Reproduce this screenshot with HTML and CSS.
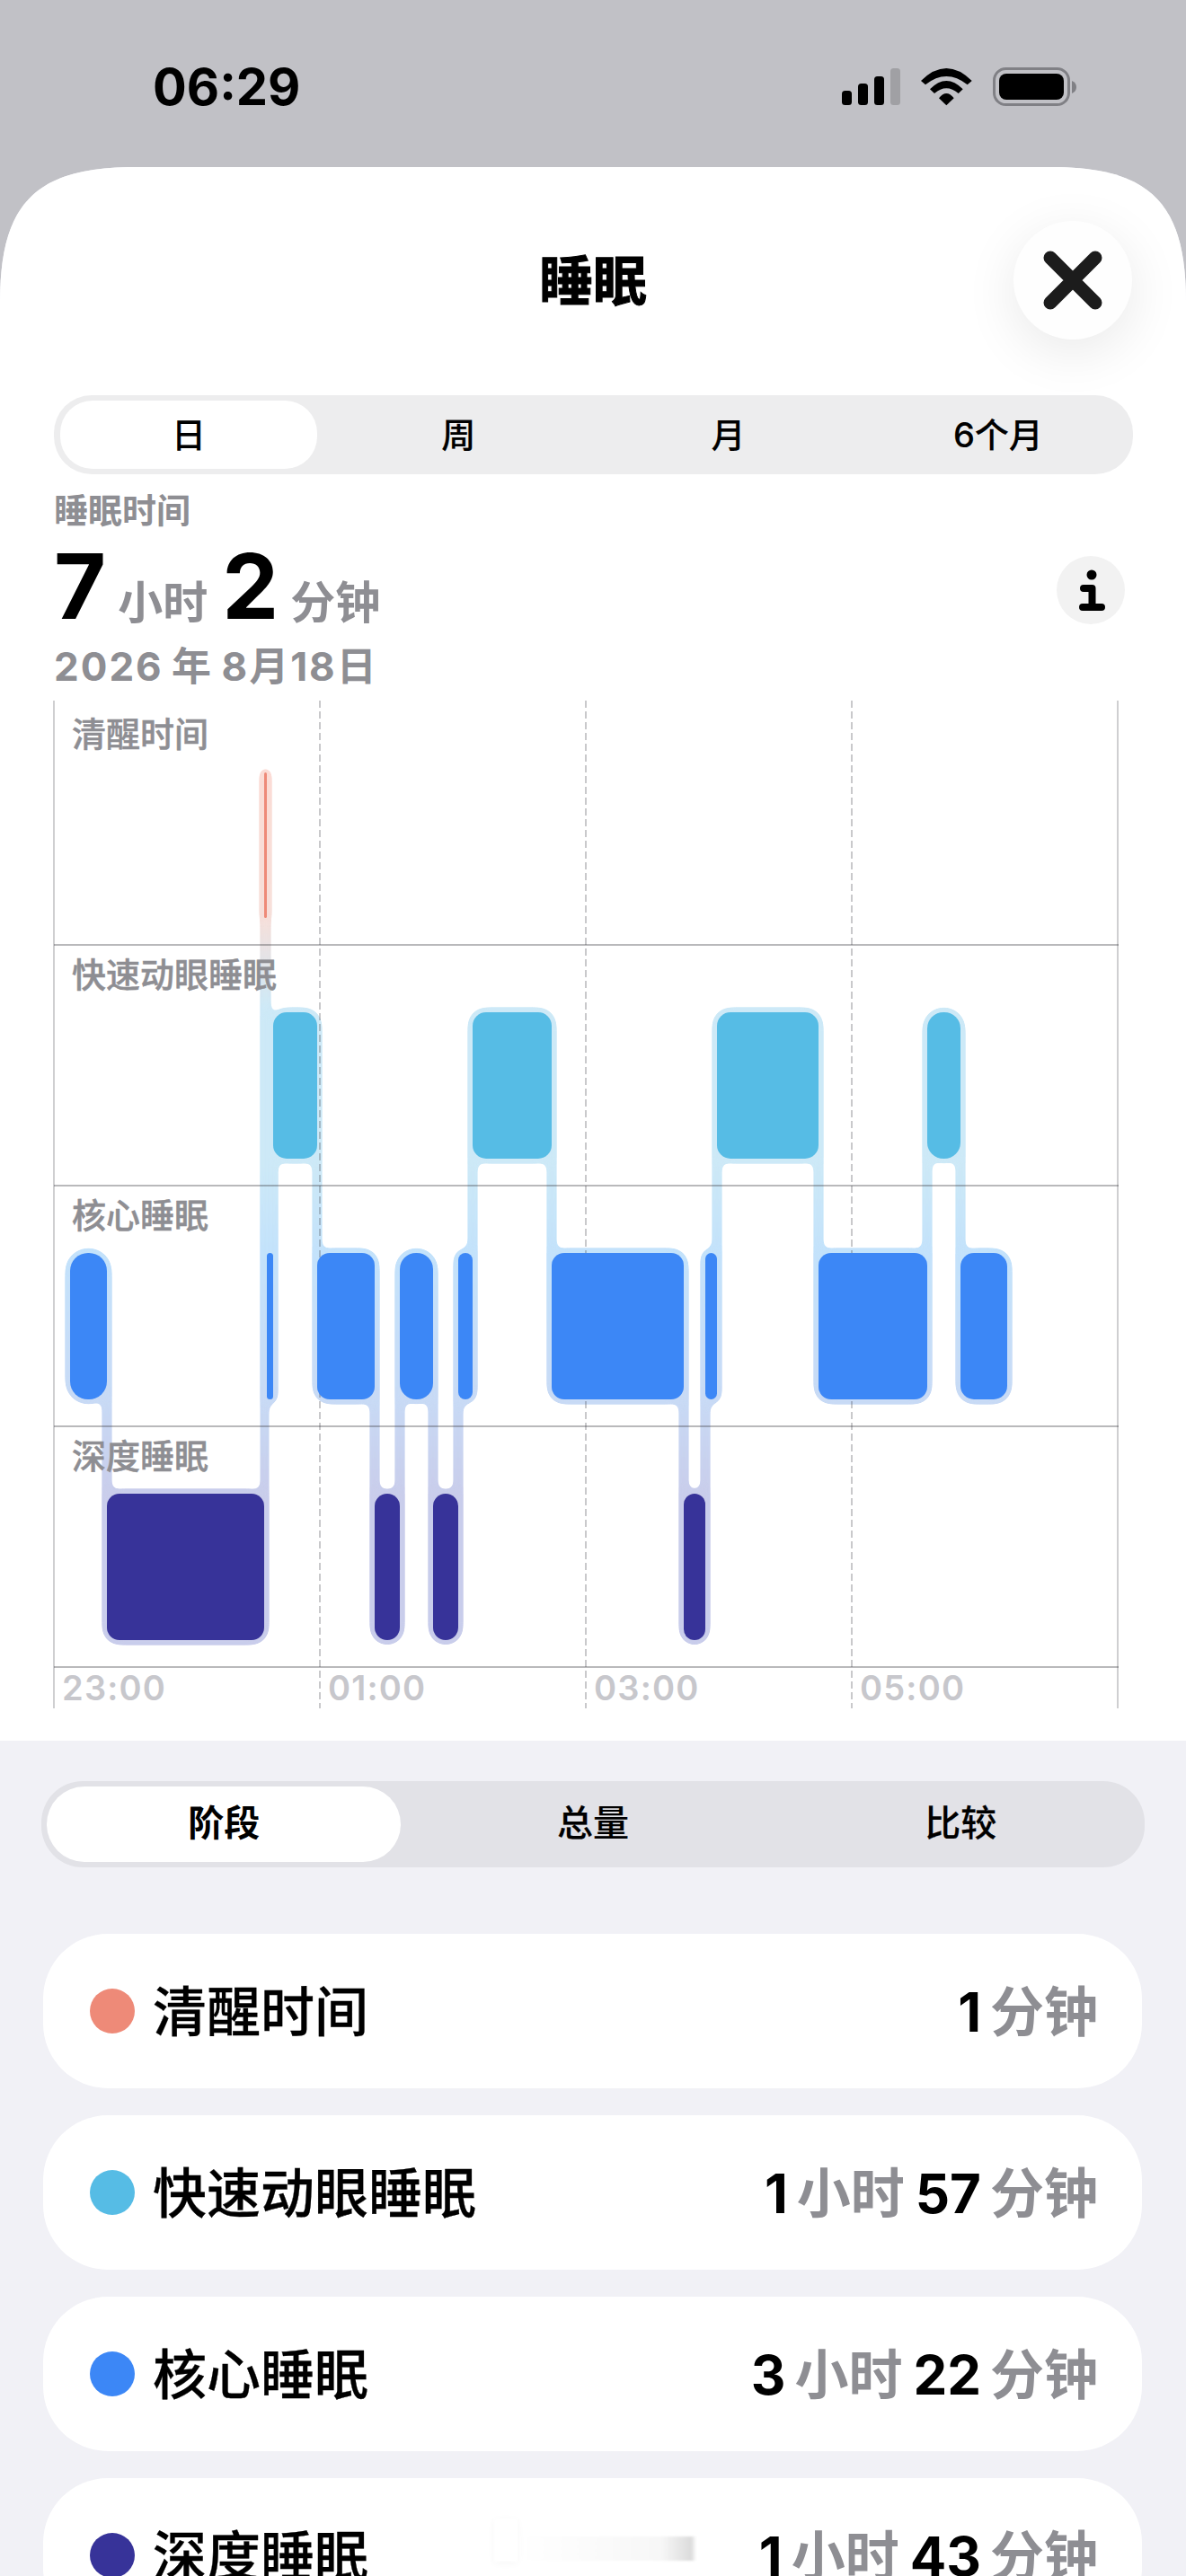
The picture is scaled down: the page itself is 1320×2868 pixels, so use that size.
FILE: index.html
```html
<!DOCTYPE html>
<html lang="zh-CN">
<head>
    <meta charset="UTF-8">
    <meta name="viewport" content="width=device-width, initial-scale=1.0">
    <title>睡眠</title>
    <link rel="stylesheet" href="styles.css">
</head>
<body>
    <div class="status-bar">
        <span class="status-time">06:29</span>
        <svg class="status-icons" width="261" height="44" viewBox="0 0 261 44">
            <rect x="0" y="26" width="11" height="16" rx="3.5"/>
            <rect x="18" y="18" width="11" height="24" rx="3.5"/>
            <rect x="36" y="10" width="11" height="32" rx="3.5"/>
            <rect x="54" y="1" width="11" height="41" rx="3.5" fill="#a0a0a4"/>
            <path d="M88 15Q116.3 -13 144.7 15L139.7 19.3Q116.3 .7 93 19.3Z"/>
            <path d="M98 24.3Q116.3 5.7 134.7 24.3L129.7 29Q116.3 17.6 103 29Z"/>
            <path d="M108 34.3Q116.3 23.7 124.7 34.3L116.3 42.3Z"/>
            <rect x="169.5" y="1.5" width="83" height="40" rx="13" fill="none" stroke="#808085" stroke-width="3"/>
            <rect x="175" y="7" width="72" height="29" rx="8"/>
            <path d="M256 15Q261 17 261 22Q261 27 256 29Z" fill="#808085"/>
        </svg>
    </div>

    <div class="sheet">
        <div class="sheet-top">
            <div class="sheet-header">
                <span></span>
                <h1 class="sheet-title">睡眠</h1>
                <button type="button" class="close-button">
                    <svg width="132" height="132" viewBox="0 0 132 132">
                        <path d="M41 41L91 91M91 41L41 91" fill="none" stroke="#1c1c1c" stroke-width="15" stroke-linecap="round"/>
                    </svg>
                </button>
            </div>

            <div class="segments segments-period">
                <div class="segment segment-active">日</div>
                <div class="segment">周</div>
                <div class="segment">月</div>
                <div class="segment">6个月</div>
            </div>

            <div class="summary">
                <div>
                    <div class="summary-label">睡眠时间</div>
                    <div class="summary-total">
                        <span class="total-num">7</span><span class="total-unit">小时</span><span class="total-num">2</span><span class="total-unit">分钟</span>
                    </div>
                    <div class="summary-date">2026 年 8月18日</div>
                </div>
                <div class="info-button">
                    <svg width="76" height="76" viewBox="0 0 76 76">
                        <circle cx="39" cy="21" r="5.5"/>
                        <path d="M30 36H39.5V56M29 57H50" fill="none" stroke="#000" stroke-width="8" stroke-linecap="round" stroke-linejoin="round"/>
                    </svg>
                </div>
            </div>

            <svg class="chart" width="1320" height="1122" viewBox="0 780 1320 1122">
                <defs>
                    <linearGradient id="haloFade" gradientUnits="userSpaceOnUse" x1="0" y1="860" x2="0" y2="1831">
                        <stop offset="0" stop-color="#fbdcd5"/>
                        <stop offset="0.167" stop-color="#f6dfda"/>
                        <stop offset="0.27" stop-color="#cde9f7"/>
                        <stop offset="0.45" stop-color="#cde9f7"/>
                        <stop offset="0.55" stop-color="#c3e2fb"/>
                        <stop offset="0.72" stop-color="#c8daf5"/>
                        <stop offset="0.83" stop-color="#c9cdeb"/>
                        <stop offset="1" stop-color="#c9cdeb"/>
                    </linearGradient>
                    <filter id="goo" filterUnits="userSpaceOnUse" x="0" y="780" width="1320" height="1122" color-interpolation-filters="sRGB">
                        <feGaussianBlur stdDeviation="5"/>
                        <feColorMatrix values="1 0 0 0 0  0 1 0 0 0  0 0 1 0 0  0 0 0 16 -6.6"/>
                    </filter>
                </defs>

                <!-- halos and connectors -->
                <g fill="url(#haloFade)" filter="url(#goo)">
                    <rect x="289" y="855" width="13" height="172" rx="6.5"/>

                    <rect x="299" y="1122" width="59" height="173" rx="20"/>
                    <rect x="521" y="1122" width="98" height="173" rx="20"/>
                    <rect x="793" y="1122" width="123" height="173" rx="20"/>
                    <rect x="1027" y="1122" width="47" height="173" rx="23"/>

                    <rect x="73" y="1390" width="51" height="173" rx="25"/>
                    <rect x="292" y="1390" width="17" height="173" rx="8"/>
                    <rect x="348" y="1390" width="74" height="173" rx="19"/>
                    <rect x="440" y="1390" width="47" height="173" rx="23"/>
                    <rect x="505" y="1390" width="26" height="173" rx="13"/>
                    <rect x="609" y="1390" width="157" height="173" rx="19"/>
                    <rect x="780" y="1390" width="23" height="173" rx="11"/>
                    <rect x="906" y="1390" width="131" height="173" rx="19"/>
                    <rect x="1064" y="1390" width="62" height="173" rx="20"/>

                    <rect x="114" y="1658" width="185" height="173" rx="19"/>
                    <rect x="412" y="1658" width="38" height="173" rx="19"/>
                    <rect x="477" y="1658" width="38" height="173" rx="19"/>
                    <rect x="756" y="1658" width="34" height="173" rx="17"/>

                    <rect x="290" y="900" width="11" height="600"/>
                    <rect x="290" y="1480" width="9" height="220"/>
                    <rect x="299" y="1200" width="10" height="300"/>
                    <rect x="348" y="1200" width="10" height="300"/>
                    <rect x="521" y="1200" width="10" height="300"/>
                    <rect x="609" y="1200" width="10" height="300"/>
                    <rect x="793" y="1200" width="10" height="300"/>
                    <rect x="906" y="1200" width="10" height="300"/>
                    <rect x="1027" y="1200" width="10" height="300"/>
                    <rect x="1064" y="1200" width="10" height="300"/>
                    <rect x="114" y="1500" width="10" height="200"/>
                    <rect x="412" y="1500" width="10" height="200"/>
                    <rect x="440" y="1500" width="10" height="200"/>
                    <rect x="477" y="1500" width="10" height="200"/>
                    <rect x="505" y="1500" width="10" height="200"/>
                    <rect x="756" y="1500" width="10" height="200"/>
                    <rect x="780" y="1500" width="10" height="200"/>
                </g>

                <!-- grid -->
                <path class="grid-dash" d="M356 780V1902M652 780V1902M948 780V1902"/>
                <path class="grid-edge" d="M60 780V1902M1244 780V1902"/>
                <path class="grid-row" d="M60 1052H1245M60 1320H1245M60 1588H1245M60 1856H1245"/>

                <!-- stages -->
                <rect x="294" y="860" width="3" height="162" rx="1.5" fill="#ee8a78"/>

                <g fill="#56bce5">
                    <rect x="304" y="1127" width="49" height="163" rx="15"/>
                    <rect x="526" y="1127" width="88" height="163" rx="15"/>
                    <rect x="798" y="1127" width="113" height="163" rx="15"/>
                    <rect x="1032" y="1127" width="37" height="163" rx="18"/>
                </g>
                <g fill="#3c87f6">
                    <rect x="78" y="1395" width="41" height="163" rx="20"/>
                    <rect x="297" y="1395" width="7" height="163" rx="3.5"/>
                    <rect x="353" y="1395" width="64" height="163" rx="14"/>
                    <rect x="445" y="1395" width="37" height="163" rx="18"/>
                    <rect x="510" y="1395" width="16" height="163" rx="8"/>
                    <rect x="614" y="1395" width="147" height="163" rx="14"/>
                    <rect x="785" y="1395" width="13" height="163" rx="6.5"/>
                    <rect x="911" y="1395" width="121" height="163" rx="14"/>
                    <rect x="1069" y="1395" width="52" height="163" rx="15"/>
                </g>
                <g fill="#373399">
                    <rect x="119" y="1663" width="175" height="163" rx="14"/>
                    <rect x="417" y="1663" width="28" height="163" rx="14"/>
                    <rect x="482" y="1663" width="28" height="163" rx="14"/>
                    <rect x="761" y="1663" width="24" height="163" rx="12"/>
                </g>

                <text class="row-label" x="80" y="831">清醒时间</text>
                <text class="row-label" x="80" y="1099">快速动眼睡眠</text>
                <text class="row-label" x="80" y="1367">核心睡眠</text>
                <text class="row-label" x="80" y="1635">深度睡眠</text>

                <text class="axis-label" x="69" y="1893">23:00</text>
                <text class="axis-label" x="365" y="1893">01:00</text>
                <text class="axis-label" x="661" y="1893">03:00</text>
                <text class="axis-label" x="957" y="1893">05:00</text>
            </svg>
        </div>

        <div class="segments segments-view">
            <div class="segment segment-active">阶段</div>
            <div class="segment">总量</div>
            <div class="segment">比较</div>
        </div>

        <div class="stage-list">
            <div class="stage-card">
                <span class="stage-dot dot-awake"></span>
                <span class="stage-name">清醒时间</span>
                <span class="stage-value"><b>1</b><i>分钟</i></span>
            </div>
            <div class="stage-card">
                <span class="stage-dot dot-rem"></span>
                <span class="stage-name">快速动眼睡眠</span>
                <span class="stage-value"><b>1</b><i>小时</i><b>57</b><i>分钟</i></span>
            </div>
            <div class="stage-card">
                <span class="stage-dot dot-core"></span>
                <span class="stage-name">核心睡眠</span>
                <span class="stage-value"><b>3</b><i>小时</i><b>22</b><i>分钟</i></span>
            </div>
            <div class="stage-card">
                <span class="stage-dot dot-deep"></span>
                <span class="stage-name">深度睡眠</span>
                <span class="stage-value"><b>1</b><i>小时</i><b>43</b><i>分钟</i></span>
                <span class="smudge"></span>
            </div>
        </div>
    </div>
</body>
</html>
```

FILE: styles.css
```css
* {
    box-sizing: border-box;
}

body {
    margin: 0;
    width: 1320px;
    height: 2868px;
    overflow: hidden;
    background-color: #c1c1c6;
    color: #000;
    font-family: Inter, "Noto Sans CJK SC", sans-serif;
}

.status-bar {
    display: flex;
    justify-content: space-between;
    align-items: flex-start;
    height: 186px;
    padding: 69px 122px 0 170px;
}

.status-time {
    font-size: 56px;
    line-height: 56px;
    font-weight: 700;
}

.status-icons {
    display: block;
    margin-top: 6px;
}

.sheet {
    height: 2682px;
    background-color: #f1f1f6;
    clip-path: path("M0 150C0 40 40 0 150 0H1170C1280 0 1320 40 1320 150V2682H0Z");
}

.sheet-top {
    background-color: #fff;
    padding-bottom: 36px;
}

.sheet-header {
    display: grid;
    grid-template-columns: 1fr auto 1fr;
    align-items: center;
    height: 254px;
    padding: 60px 60px 62px;
}

.sheet-title {
    margin: 0 0 -2px;
    font-size: 60px;
    line-height: 70px;
    font-weight: 700;
    -webkit-text-stroke: 1px #000;
}

.close-button {
    justify-self: end;
    width: 132px;
    height: 132px;
    padding: 0;
    border: none;
    border-radius: 50%;
    background-color: #fefefe;
    box-shadow: 0 14px 60px rgba(0, 0, 0, 0.09);
}

.close-button svg {
    display: block;
}

.segments {
    display: grid;
    align-items: stretch;
}

.segment {
    display: flex;
    justify-content: center;
    align-items: center;
    font-weight: 500;
    -webkit-text-stroke: 0.2px #000;
}

.segment-active {
    background-color: #fff;
    font-weight: 700;
    -webkit-text-stroke: 0;
}

.segments-period {
    grid-template-columns: repeat(4, 1fr);
    height: 88px;
    margin: 0 59px 0 60px;
    background-color: #ededee;
    border-radius: 42px;
    font-size: 38px;
}

.segments-period .segment {
    padding-bottom: 5px;
}

.segments-period .segment-active {
    margin: 6px 7px;
    border-radius: 36px;
    font-weight: 500;
    -webkit-text-stroke: 0.2px #000;
}

.segments-view {
    grid-template-columns: repeat(3, 1fr);
    height: 96px;
    margin: 45px 46px 0;
    background-color: #e2e2e7;
    border-radius: 46px;
    font-size: 40px;
}

.segments-view .segment {
    padding-bottom: 8px;
}

.segments-view .segment-active {
    margin: 6px 9px 6px 6px;
    border-radius: 42px;
}

.summary {
    display: flex;
    justify-content: space-between;
    align-items: flex-start;
    height: 252px;
    padding: 0 68px 0 60px;
}

.summary-label {
    margin-top: 15px;
    font-size: 38px;
    line-height: 50px;
    font-weight: 700;
    color: #8e8e93;
}

.summary-total {
    display: flex;
    align-items: baseline;
    margin-top: 10px;
    height: 100px;
}

.total-num {
    font-size: 100px;
    line-height: 100px;
    font-weight: 700;
}

.total-unit {
    margin: 0 16px 0 13px;
    font-size: 50px;
    font-weight: 700;
    color: #8e8e93;
}

.summary-date {
    margin-top: 11px;
    font-size: 44px;
    line-height: 56px;
    font-weight: 700;
    letter-spacing: 2px;
    word-spacing: -3px;
    color: #8e8e93;
}

.info-button {
    width: 76px;
    height: 76px;
    margin-top: 91px;
    border-radius: 50%;
    background-color: #f2f2f2;
}

.info-button svg {
    display: block;
}

.chart {
    display: block;
}

.grid-dash {
    fill: none;
    stroke: rgba(60, 60, 67, 0.28);
    stroke-width: 2;
    stroke-dasharray: 8 4;
}

.grid-edge {
    fill: none;
    stroke: #cfcfd1;
    stroke-width: 2;
}

.grid-row {
    fill: none;
    stroke: rgba(60, 60, 67, 0.36);
    stroke-width: 2;
}

.row-label {
    font-size: 38px;
    font-weight: 500;
    fill: #8e8e93;
    stroke: #8e8e93;
    stroke-width: 0.5;
}

.axis-label {
    font-size: 38px;
    font-weight: 600;
    letter-spacing: 1.2px;
    fill: #c7c7cc;
}

.stage-list {
    display: flex;
    flex-direction: column;
    gap: 30px;
    margin: 74px 49px 0 48px;
}

.stage-card {
    position: relative;
    display: flex;
    align-items: center;
    flex-shrink: 0;
    height: 172px;
    padding: 0 49px 0 52px;
    background-color: #fff;
    border-radius: 72px;
}

.stage-dot {
    flex-shrink: 0;
    width: 50px;
    height: 50px;
    margin-right: 20px;
    border-radius: 50%;
}

.dot-awake {
    background-color: #ee8a78;
}

.dot-rem {
    background-color: #56bce5;
}

.dot-core {
    background-color: #3c87f6;
}

.dot-deep {
    background-color: #373399;
}

.stage-name {
    flex: 1;
    margin-bottom: 8px;
    font-size: 60px;
    font-weight: 500;
    -webkit-text-stroke: 0.3px #000;
}

.stage-value {
    display: flex;
    align-items: baseline;
    margin-bottom: 8px;
}

.stage-value b {
    font-size: 60px;
    font-weight: 700;
}

.stage-value i {
    margin: 0 12px 0 10px;
    font-size: 60px;
    font-style: normal;
    font-weight: 700;
    color: #8e8e93;
}

.stage-value i:last-child {
    margin-right: 0;
}

/* faint smear in the last row of the screenshot */
.smudge {
    position: absolute;
    left: 532px;
    top: 65px;
    width: 195px;
    height: 27px;
    background: linear-gradient(to right, #fff, #f7f7f7 80%, #dcdcdc 97%, #fff);
    filter: blur(1px);
}

.smudge::before {
    content: "";
    position: absolute;
    left: -30px;
    top: -20px;
    width: 26px;
    height: 48px;
    background-color: #fff;
    box-shadow: 0 2px 8px rgba(0, 0, 0, 0.04);
}
```
